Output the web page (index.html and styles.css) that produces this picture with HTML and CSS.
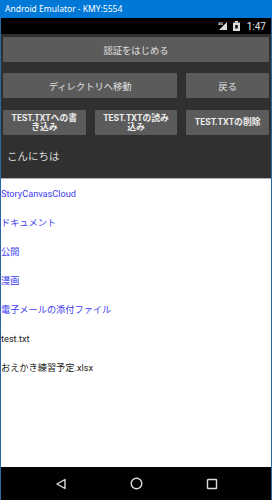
FILE: index.html
```html
<!DOCTYPE html>
<html lang="ja">
<head>
  <meta charset="UTF-8" />
  <title>Android Emulator - KMY:5554</title>
  <link rel="stylesheet" href="styles.css">
</head>
<body>
  <div class="window">
    <div class="titlebar">Android Emulator - KMY:5554</div>
    <div class="screen">
      <div class="statusbar">
        <svg class="sig" width="10" height="10" viewBox="0 0 10 10">
          <polygon points="9,1 9,9 1,9" fill="#ddd"/>
          <text x="0" y="4" font-size="4" font-family="Roboto" font-weight="bold" fill="#ddd">4G</text>
        </svg>
        <svg class="batt" width="7" height="10" viewBox="0 0 7 10">
          <rect x="2" y="0" width="3" height="1.5" fill="#ddd"/>
          <rect x="0" y="1.5" width="7" height="8.5" rx="0.5" fill="#ddd"/>
          <rect x="2.2" y="4" width="2.6" height="3.5" fill="#111"/>
        </svg>
        <span class="clock">1:47</span>
      </div>

      <div class="app">
        <div class="btn-grid">
          <button class="btn wide3">認証をはじめる</button>
          <button class="btn wide2">ディレクトリへ移動</button>
          <button class="btn">戻る</button>
          <button class="btn small">TEST.TXTへの書き込み</button>
          <button class="btn small">TEST.TXTの読み込み</button>
          <button class="btn small">TEST.TXTの削除</button>
        </div>
        <div class="hello">こんにちは</div>
      </div>

      <ul class="files">
        <li class="dir">StoryCanvasCloud</li>
        <li class="dir">ドキュメント</li>
        <li class="dir">公開</li>
        <li class="dir">漫画</li>
        <li class="dir">電子メールの添付ファイル</li>
        <li>test.txt</li>
        <li>おえかき練習予定.xlsx</li>
      </ul>

      <div class="navbar">
        <svg width="12" height="12" viewBox="0 0 12 12">
          <polygon points="10,1.5 10,10.5 2,6" fill="none" stroke="#ddd" stroke-width="1.4" stroke-linejoin="round"/>
        </svg>
        <svg width="13" height="13" viewBox="0 0 13 13">
          <circle cx="6.5" cy="6.5" r="5.3" fill="none" stroke="#ddd" stroke-width="1.4"/>
        </svg>
        <svg width="12" height="12" viewBox="0 0 12 12">
          <rect x="1.5" y="1.5" width="9" height="9" rx="0.6" fill="none" stroke="#ddd" stroke-width="1.4"/>
        </svg>
      </div>
    </div>
  </div>
</body>
</html>
```

FILE: styles.css
```css
body {
  margin: 0;
  background-color: #2a67a6;
  font-family: Roboto, "Noto Sans CJK JP", sans-serif;
}
.window {
  width: 272px;
  height: 500px;
  display: flex;
  flex-direction: column;
}
.titlebar {
  height: 18px;
  line-height: 18px;
  padding-left: 5px;
  background-color: #0078d7;
  color: #ffffff;
  font-family: "Noto Sans", "Noto Sans CJK JP", sans-serif;
  font-size: 8.5px;
}
.screen {
  flex: 1;
  display: flex;
  flex-direction: column;
  margin: 0 1px;
  background-color: #ffffff;
  min-height: 0;
}
.statusbar {
  height: 16px;
  background-color: #000000;
  display: flex;
  align-items: center;
  justify-content: flex-end;
  gap: 5px;
  padding-right: 5px;
}
.clock {
  color: #e6e6e6;
  font-size: 10px;
  margin-left: 2px;
}
.app {
  background-color: #303030;
  padding: 3px 2px 0 2px;
  height: 141px;
  border-bottom: 1px solid #a9b2bc;
}
.btn-grid {
  display: grid;
  grid-template-columns: 1fr 1fr 1fr;
  column-gap: 9px;
  row-gap: 11px;
}
.btn {
  height: 25px;
  border: none;
  border-radius: 1px;
  background-color: #5b5b5b;
  color: #e2e2e2;
  font-family: Roboto, "Noto Sans CJK JP", sans-serif;
  font-size: 9.3px;
  padding: 0;
}
.wide3 {
  grid-column: span 3;
}
.wide2 {
  grid-column: span 2;
}
.small {
  font-size: 8.8px;
  font-weight: bold;
  line-height: 9px;
  padding: 0 5px;
  color: #ececec;
}
.btn-grid .small {
  margin-top: 1px;
}
.hello {
  margin-top: 13px;
  padding-left: 4px;
  font-size: 10.5px;
  color: #d8d8d8;
}
.files {
  flex: 1;
  list-style: none;
  margin: 0;
  padding: 0;
}
.files li {
  height: 29px;
  line-height: 29px;
  font-size: 9.2px;
  color: #222222;
}
.files .dir {
  color: #3c3cf0;
}
.navbar {
  height: 33px;
  background-color: #000000;
  display: flex;
  align-items: center;
  justify-content: center;
  gap: 63px;
}
```
